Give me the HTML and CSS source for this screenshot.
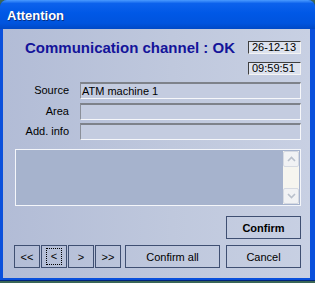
FILE: index.html
```html
<!DOCTYPE html>
<html lang="en">
<head>
    <meta charset="UTF-8">
    <title>Attention</title>
    <link rel="stylesheet" href="styles.css">
</head>
<body>
    <div class="window">
        <div class="titlebar">
            <span class="title">Attention</span>
        </div>
        <div class="client">
            <div class="status-grid">
                <div class="status">Communication channel : OK</div>
                <div class="stamp">26-12-13</div>
                <div class="stamp stamp-time">09:59:51</div>
            </div>

            <div class="fields">
                <span class="label">Source</span>
                <div class="field">ATM machine 1</div>
                <span class="label">Area</span>
                <div class="field"></div>
                <span class="label">Add. info</span>
                <div class="field"></div>
            </div>

            <div class="memo">
                <div class="memo-text"></div>
                <div class="scrollbar">
                    <div class="scroll-btn">
                        <svg width="9" height="6" viewBox="0 0 9 6"><polyline points="1,5 4.5,1.5 8,5" fill="none" stroke="#b9c0cc" stroke-width="1.6"/></svg>
                    </div>
                    <div class="scroll-track"></div>
                    <div class="scroll-btn">
                        <svg width="9" height="6" viewBox="0 0 9 6"><polyline points="1,1 4.5,4.5 8,1" fill="none" stroke="#b9c0cc" stroke-width="1.6"/></svg>
                    </div>
                </div>
            </div>

            <div class="confirm-row">
                <button class="btn btn-confirm">Confirm</button>
            </div>

            <div class="bottom-row">
                <div class="nav">
                    <button class="btn btn-nav">&lt;&lt;</button>
                    <button class="btn btn-nav focused"><span class="focus-ring">&lt;</span></button>
                    <button class="btn btn-nav">&gt;</button>
                    <button class="btn btn-nav">&gt;&gt;</button>
                </div>
                <button class="btn btn-all">Confirm all</button>
                <button class="btn btn-cancel">Cancel</button>
            </div>
        </div>
    </div>
</body>
</html>
```

FILE: styles.css
```css
body {
    margin: 0;
    background: #3b6656;
    font-family: 'Liberation Sans', Arial, sans-serif;
    font-size: 11px;
    color: #000;
}

.window {
    width: 315px;
    height: 281px;
    box-sizing: border-box;
    padding: 0 5px 3px 3px;
    background: #0a50dc;
    border-radius: 7px 7px 0 0;
    display: flex;
    flex-direction: column;
    box-shadow: inset 0 -1px 0 #00247a;
}

.titlebar {
    height: 29px;
    margin: 0 -5px 0 -3px;
    padding-left: 7px;
    display: flex;
    align-items: center;
    border-radius: 7px 7px 0 0;
    background: linear-gradient(to bottom, #4a9bff 0%, #0c62ec 12%, #0058e6 45%, #0054de 80%, #0049c6 100%);
}

.title {
    color: #fff;
    font-weight: bold;
    font-size: 13px;
    text-shadow: 1px 1px 0 #0a2f80;
    margin-top: 2px;
}

.client {
    flex: 1;
    padding: 12px 9px 0 11px;
    background: linear-gradient(to right, #b2bcd6 0%, #bfc8dd 55%, #c8d0e3 100%);
}

.status-grid {
    display: grid;
    grid-template-columns: 1fr 53px;
    row-gap: 8px;
    align-items: center;
}

.status {
    margin-left: 11px;
    font-size: 15px;
    font-weight: bold;
    color: #14149a;
    line-height: 13px;
}

.stamp {
    grid-column: 2;
    height: 13px;
    box-sizing: border-box;
    border: 1px solid #3f3f3f;
    border-right-color: #f4f4f4;
    border-bottom-color: #f4f4f4;
    background: #dde2ee;
    line-height: 11px;
    padding-left: 3px;
}

.stamp-time {
    grid-row: 2;
}

.fields {
    margin-top: 7px;
    display: grid;
    grid-template-columns: 55px 1fr;
    column-gap: 11px;
    row-gap: 3.5px;
}

.label {
    text-align: right;
    line-height: 17px;
}

.field {
    height: 17px;
    box-sizing: border-box;
    border: 1px solid #8a8f99;
    border-top: 2px solid #7e828a;
    border-right-color: #f6f7fa;
    border-bottom-color: #f6f7fa;
    background: #c4cce0;
    padding-left: 1px;
    line-height: 14px;
}

.memo {
    margin: 9px 0 0 1px;
    height: 57px;
    box-sizing: border-box;
    border: 1px solid #f4f6fa;
    background: #a6b3cd;
    display: flex;
    padding: 1px;
}

.memo-text {
    flex: 1;
}

.scrollbar {
    width: 16px;
    display: flex;
    flex-direction: column;
    background: #f6f5ef;
}

.scroll-btn {
    height: 16px;
    box-sizing: border-box;
    border: 1px solid #d6dae2;
    border-radius: 2px;
    background: #f1f2f4;
    display: flex;
    align-items: center;
    justify-content: center;
}

.scroll-track {
    flex: 1;
}

.btn {
    height: 23px;
    box-sizing: border-box;
    border: 1px solid #3f4f72;
    background: transparent;
    font-family: 'Liberation Sans', Arial, sans-serif;
    font-size: 11px;
    color: #000;
    padding: 0;
}

.confirm-row {
    margin-top: 10px;
    display: flex;
    justify-content: flex-end;
}

.btn-confirm {
    width: 75px;
    font-weight: bold;
}

.bottom-row {
    margin-top: 6px;
    display: flex;
}

.nav {
    display: flex;
    gap: 1px;
}

.btn-nav {
    width: 26px;
}

.focused {
    display: flex;
    align-items: center;
    justify-content: center;
}

.focus-ring {
    width: 16px;
    height: 17px;
    box-sizing: border-box;
    border: 1px dotted #000;
    line-height: 15px;
}

.btn-all {
    width: 95px;
    margin-left: 4px;
}

.btn-cancel {
    width: 75px;
    margin-left: auto;
}
```
